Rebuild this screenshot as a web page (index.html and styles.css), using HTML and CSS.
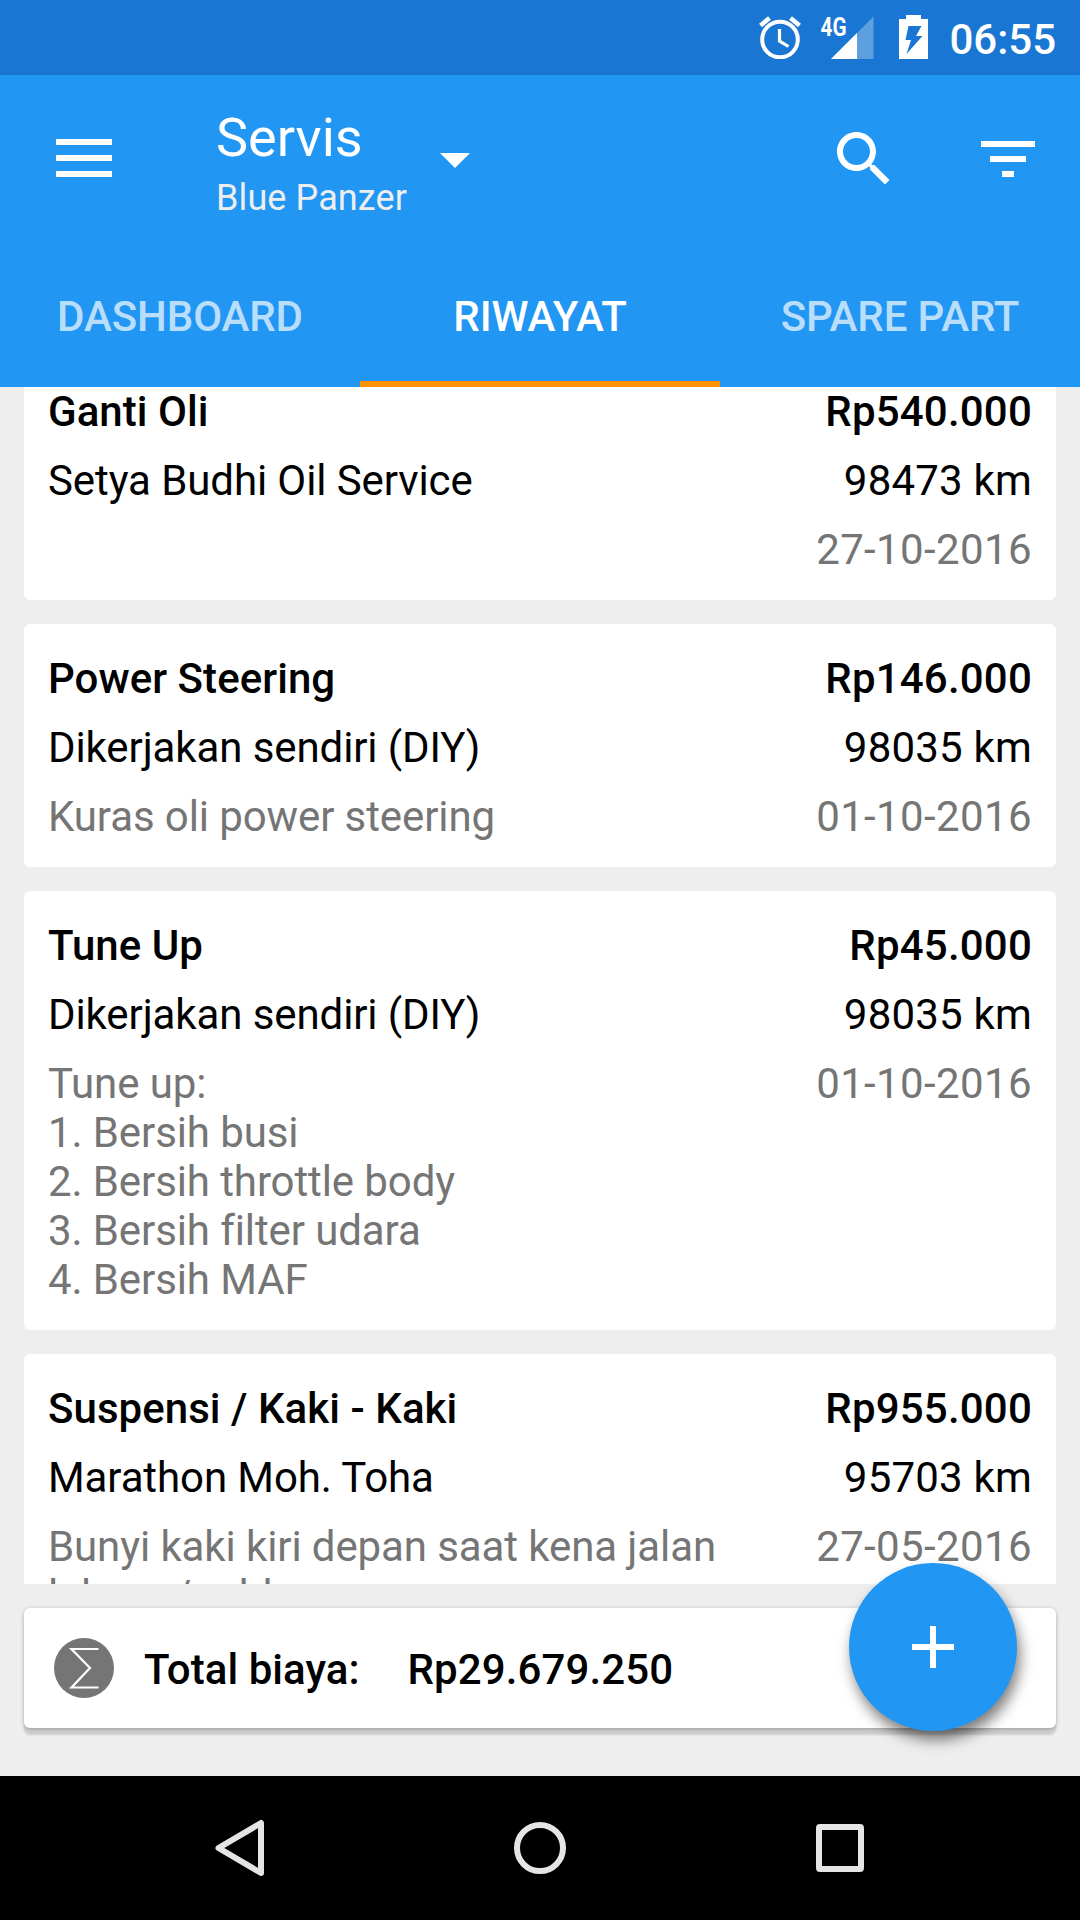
FILE: index.html
```
<!DOCTYPE html>
<html lang="id">
<head>
    <meta charset="UTF-8">
    <meta name="viewport" content="width=device-width, initial-scale=1.0">
    <title>Servis</title>
    <link rel="stylesheet" href="styles.css">
</head>
<body>
    <div class="status-bar">
        <svg class="alarm" width="42" height="44" viewBox="0 0 42 44">
            <g fill="none" stroke="#fff">
                <circle cx="21" cy="24.5" r="17.8" stroke-width="4"/>
                <path d="M1.500 10.500 L10.500 3 M31.500 3 L40.500 10.500" stroke-width="4.5"/>
                <path d="M20.500 14 V26 L29.500 31.500" stroke-width="3.2"/>
            </g>
        </svg>
        <svg class="signal" width="54" height="44" viewBox="0 0 54 44">
            <path d="M11 43 L53.5 43 V0.5 Z" fill="#fff" fill-opacity="0.3"/>
            <path d="M11 43 H37 V17 Z" fill="#fff"/>
            <text x="0.500" y="20" textLength="26" lengthAdjust="spacingAndGlyphs">4G</text>
        </svg>
        <svg class="battery" width="29" height="44" viewBox="0 0 29 44">
            <path fill="#fff" fill-rule="evenodd" d="M7 0 H22 V4 H29 V44 H0 V4 H7 Z M9.5 11 H22.5 L17 21 H23.5 L7.500 39 L12 25 H6.500 Z"/>
        </svg>
        <span class="clock">06:55</span>
    </div>

    <header class="app-bar">
        <div class="toolbar">
            <svg class="menu" width="56" height="38" viewBox="0 0 56 38">
                <path fill="#fff" d="M0 0h56v6H0zM0 16h56v6H0zM0 32h56v6H0z"/>
            </svg>
            <div class="title-box">
                <h1>Servis</h1>
                <p>Blue Panzer</p>
            </div>
            <svg class="caret" width="30" height="15" viewBox="0 0 30 15">
                <path fill="#fff" d="M0 0h30L15 15z"/>
            </svg>
            <svg class="search" width="72" height="72" viewBox="0 0 24 24">
                <path fill="#fff" d="M15.5 14h-.79l-.28-.27C15.41 12.590 16 11.110 16 9.500 16 5.910 13.090 3 9.500 3S3 5.910 3 9.500 5.910 16 9.500 16c1.610 0 3.090-.59 4.230-1.570l.27.28v.79l5 4.990L20.490 19l-4.990-5zm-6 0C7.010 14 5 11.990 5 9.500S7.010 5 9.500 5 14 7.010 14 9.500 11.990 14 9.500 14z"/>
            </svg>
            <svg class="filter" width="72" height="72" viewBox="0 0 24 24">
                <path fill="#fff" d="M10 18h4v-2h-4v2zM3 6v2h18V6H3zm3 7h12v-2H6v2z"/>
            </svg>
        </div>
        <nav class="tabs">
            <a class="tab">DASHBOARD</a>
            <a class="tab active">RIWAYAT</a>
            <a class="tab">SPARE PART</a>
        </nav>
    </header>

    <main class="list">
        <article class="card">
            <div class="row title"><span>Ganti Oli</span><span>Rp540.000</span></div>
            <div class="row"><span>Setya Budhi Oil Service</span><span>98473 km</span></div>
            <div class="row note"><span></span><span>27-10-2016</span></div>
        </article>
        <article class="card">
            <div class="row title"><span>Power Steering</span><span>Rp146.000</span></div>
            <div class="row"><span>Dikerjakan sendiri (DIY)</span><span>98035 km</span></div>
            <div class="row note"><span>Kuras oli power steering</span><span>01-10-2016</span></div>
        </article>
        <article class="card">
            <div class="row title"><span>Tune Up</span><span>Rp45.000</span></div>
            <div class="row"><span>Dikerjakan sendiri (DIY)</span><span>98035 km</span></div>
            <div class="row note">
                <span>Tune up:<br>1. Bersih busi<br>2. Bersih throttle body<br>3. Bersih filter udara<br>4. Bersih MAF</span>
                <span>01-10-2016</span>
            </div>
        </article>
        <article class="card">
            <div class="row title"><span>Suspensi / Kaki - Kaki</span><span>Rp955.000</span></div>
            <div class="row"><span>Marathon Moh. Toha</span><span>95703 km</span></div>
            <div class="row note"><span>Bunyi kaki kiri depan saat kena jalan<br>lubang/poldur</span><span>27-05-2016</span></div>
        </article>
    </main>

    <footer class="total-area">
        <div class="total">
            <svg class="sigma" width="60" height="60" viewBox="0 0 60 60">
                <circle cx="30" cy="30" r="30" fill="#757575"/>
                <path d="M44.500 11 H17.500 L36 30 L17.500 49.500 H44.500" fill="none" stroke="#fff" stroke-width="2.2"/>
            </svg>
            <span class="label">Total biaya:</span>
            <span class="amount">Rp29.679.250</span>
        </div>
        <button class="fab" aria-label="Tambah">
            <svg width="42" height="42" viewBox="0 0 42 42">
                <path fill="#fff" d="M18 0h6v18h18v6H24v18h-6V24H0v-6h18z"/>
            </svg>
        </button>
    </footer>

    <div class="nav-bar">
        <svg width="60" height="60" viewBox="0 0 60 60"><path d="M51 5 V55 L8.500 30 Z"/></svg>
        <svg width="60" height="60" viewBox="0 0 60 60"><circle cx="30" cy="30" r="23"/></svg>
        <svg width="60" height="60" viewBox="0 0 60 60"><rect x="9" y="9" width="42" height="42" rx="1"/></svg>
    </div>
</body>
</html>
```
FILE: styles.css
```
* {
    box-sizing: border-box;
}

body {
    margin: 0;
    width: 1080px;
    height: 1920px;
    display: flex;
    flex-direction: column;
    overflow: hidden;
    background: #eeeeee;
    color: #000;
    font-family: Roboto, sans-serif;
    font-size: 42px;
    line-height: 49px;
}

svg {
    display: block;
    flex: none;
}

h1, p {
    margin: 0;
    font-weight: 400;
}

.status-bar {
    flex: none;
    height: 75px;
    padding: 15px 24px 0 0;
    display: flex;
    justify-content: flex-end;
    align-items: flex-start;
    background: #1976d2;
    color: #fff;
}

.alarm {
    margin-right: 19px;
}

.signal {
    margin: 1px 25px 0 0;
    overflow: visible;
}

.signal text {
    fill: #fff;
    font-size: 26px;
    font-weight: 700;
}

.battery {
    margin-right: 21px;
}

.clock {
    font-weight: 500;
}

.app-bar {
    flex: none;
    height: 312px;
    background: #2196f3;
    color: #fff;
}

.toolbar {
    height: 168px;
    padding: 0 36px 0 56px;
    display: flex;
    align-items: center;
}

.menu {
    margin-bottom: 2px;
}

.title-box {
    width: 224px;
    margin-left: 104px;
    padding-top: 10px;
}

.title-box h1 {
    margin-bottom: 5px;
    font-size: 54px;
    line-height: 63px;
}

.title-box p {
    font-size: 36px;
    line-height: 48px;
    letter-spacing: 0.1px;
    color: #eeeeee;
}

.caret {
    margin-top: 2px;
}

.search {
    margin: 0 72px 0 auto;
}

.tabs {
    display: flex;
    height: 144px;
}

.tab {
    flex: 1;
    padding-top: 49px;
    text-align: center;
    font-weight: 500;
    letter-spacing: -0.1px;
    color: rgba(255, 255, 255, 0.7);
}

.tab.active {
    color: #fff;
    border-bottom: 6px solid #ff9100;
}

.list {
    flex: none;
    height: 1197px;
    padding: 0 24px;
    display: flex;
    flex-direction: column;
    gap: 24px;
    overflow: hidden;
}

.card {
    flex: none;
    padding: 30px 24px 26px;
    display: flex;
    flex-direction: column;
    gap: 20px;
    background: #fff;
    border-radius: 6px;
}

/* list is scrolled, first card is partly hidden */
.card:first-child {
    margin-top: -30px;
}

.row {
    display: flex;
    justify-content: space-between;
    min-height: 49px;
    letter-spacing: -0.1px;
}

.row span:last-child {
    letter-spacing: 0.2px;
}

.title, .total {
    font-weight: 500;
    letter-spacing: 0.05px;
}

.note {
    color: #757575;
}

.note span:last-child {
    letter-spacing: 0.38px;
}

.total-area {
    flex: none;
    position: relative;
    height: 192px;
    padding: 24px 24px 0;
}

.total {
    display: flex;
    align-items: center;
    height: 120px;
    padding: 2px 30px 0;
    background: #fff;
    border-radius: 6px;
    box-shadow: 0 7px 2px rgba(0, 0, 0, 0.13), 0 1px 4px rgba(0, 0, 0, 0.25);
}

.sigma {
    margin-bottom: 2px;
}

.label {
    margin-left: 30px;
}

.amount {
    margin-left: 48px;
    letter-spacing: 0.1px;
}

.fab {
    position: absolute;
    top: -21px;
    right: 63px;
    width: 168px;
    height: 168px;
    padding: 0;
    display: flex;
    align-items: center;
    justify-content: center;
    border: none;
    border-radius: 50%;
    background: #2196f3;
    box-shadow: 3px 9px 14px rgba(0, 0, 0, 0.5);
}

.nav-bar {
    flex: none;
    height: 144px;
    padding: 0 210px;
    display: flex;
    justify-content: space-between;
    align-items: center;
    background: #000;
}

.nav-bar svg {
    fill: none;
    stroke: #e5e5e5;
    stroke-width: 6;
    stroke-linejoin: round;
}
```
